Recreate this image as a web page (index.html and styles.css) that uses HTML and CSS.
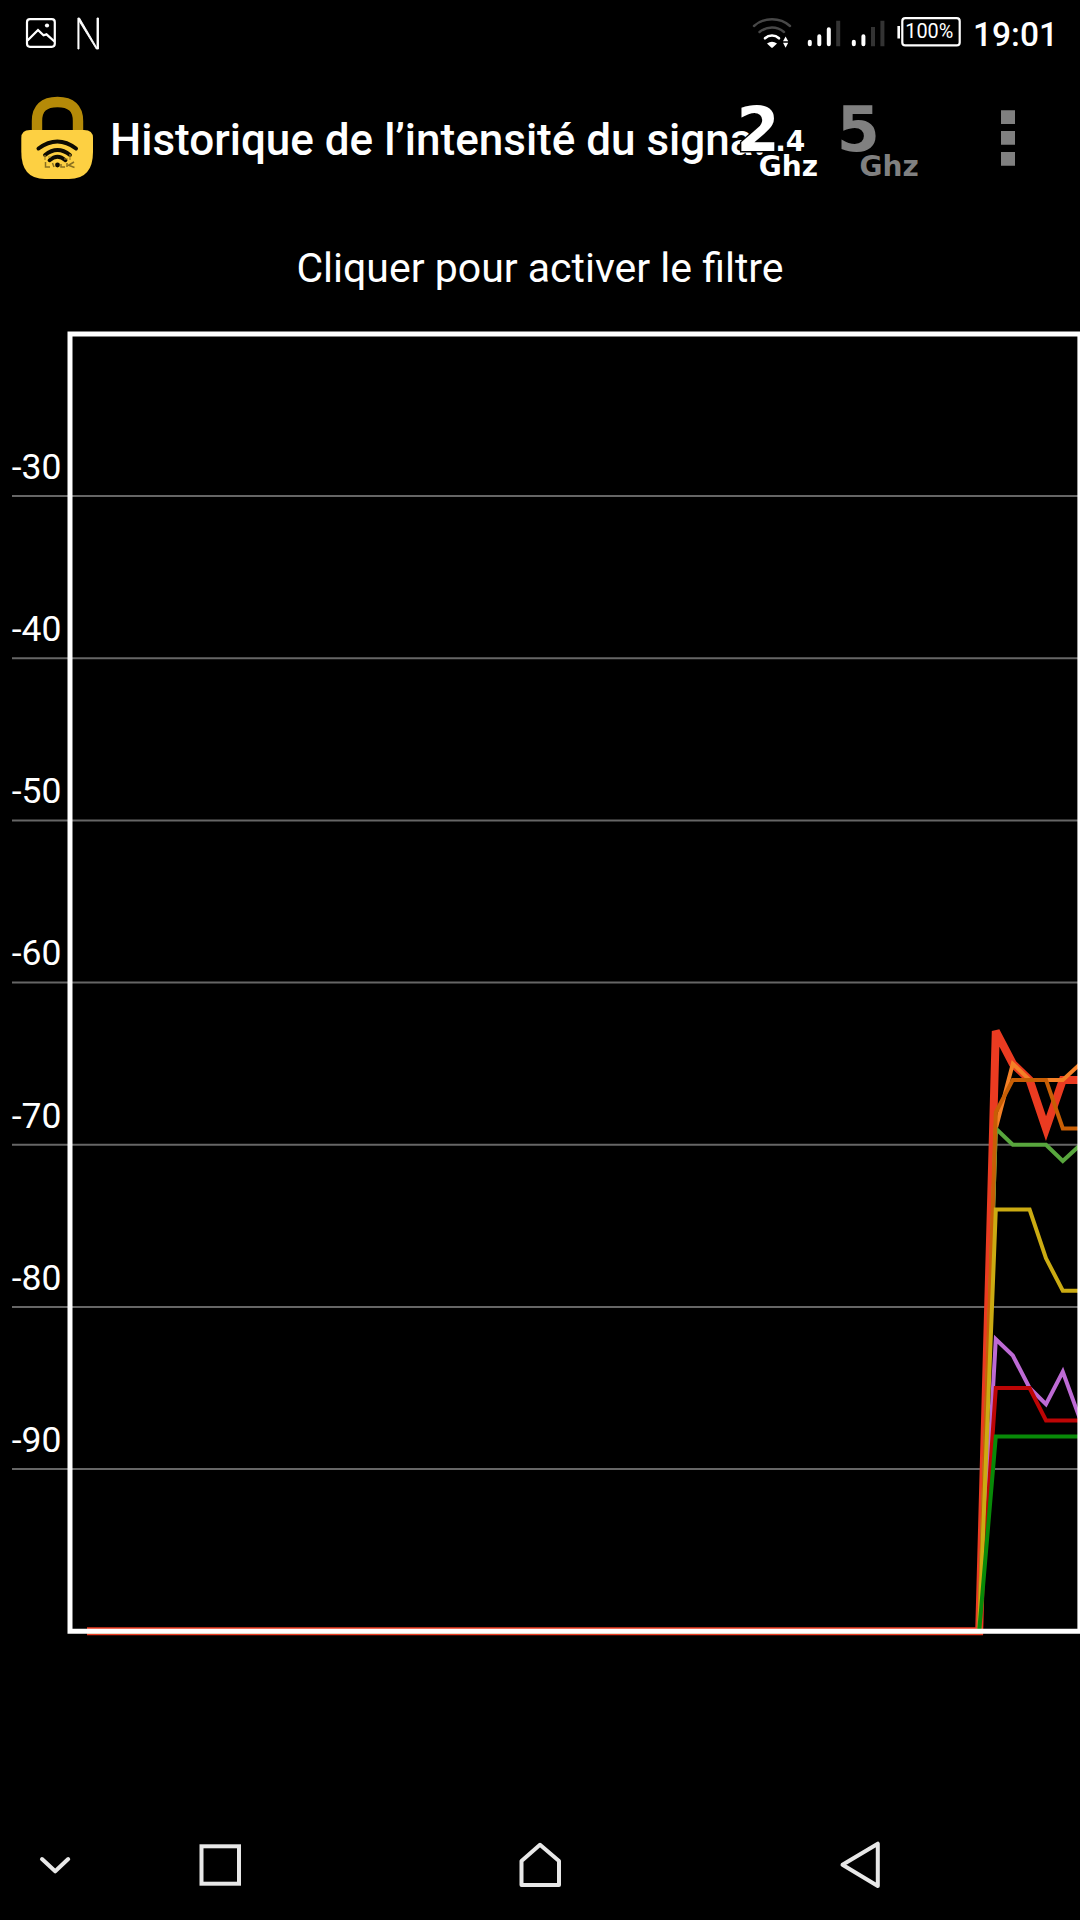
FILE: index.html
```
<!DOCTYPE html>
<html lang="fr">

<head>
    <meta charset="UTF-8">
    <meta name="viewport" content="width=device-width, initial-scale=1.0">
    <title>Historique de l’intensité du signal</title>
    <link rel="stylesheet" href="styles.css">
</head>

<body>
    <div class="status-bar">
        <svg class="status-icons" width="80" height="72" viewBox="20 0 80 72">
            <rect x="27" y="19.2" width="27.8" height="27.6" rx="3" fill="none" stroke="#fff" stroke-width="2.2"/>
            <path d="M27.5 40.5L38 30L43.5 35.3L46.5 34.3L54.5 41.5" fill="none" stroke="#fff" stroke-width="2.3"/>
            <circle cx="47" cy="25.5" r="2.1" fill="#fff"/>
            <path d="M77.9 49V18H79.5L97 48V18H98.5V49H96.3L79 21V49Z" fill="#fff" stroke="#fff" stroke-width=".9"/>
        </svg>

        <svg class="status-icons" width="220" height="72" viewBox="750 0 220 72">
            <!-- wifi -->
            <g fill="none" stroke-linecap="round">
                <path d="M754 26C764 17 780 17 790 26" stroke="#484848" stroke-width="2.4"/>
                <path d="M759.5 32C767 26 777 26 784 32" stroke="#484848" stroke-width="2.4"/>
                <path d="M765 38.3C769 34.6 775 34.6 779 38.3" stroke="#fff" stroke-width="2.6"/>
            </g>
            <path d="M767 43.5Q772 40 777 43.5L772.8 47.5Q772 48.2 771.2 47.5Z" fill="#fff"/>
            <path d="M783 41.3L785.6 36.5L788.2 41.3ZM783 42.8L785.6 47.7L788.2 42.8Z" fill="#fff"/>
            <!-- sim 1 and sim 2 -->
            <g stroke-width="4" stroke-linecap="round" stroke="#fff">
                <path d="M809.8 41.8V44.3M819.3 36.3V44.3M828.8 29.3V44.3"/>
                <path d="M853.8 41.8V44.3M863.4 36.3V44.3"/>
            </g>
            <path d="M838.2 20.7V46.3M873 27V46.3M882.4 20.7V46.3" stroke="#333" stroke-width="4"/>
            <!-- battery -->
            <rect x="902.3" y="18.2" width="57.4" height="27.2" rx="3" fill="none" stroke="#fff" stroke-width="2.2"/>
            <path d="M898.7 26V38.5" stroke="#fff" stroke-width="2.6"/>
            <text class="battery" x="905.3" y="38.4" textLength="48" lengthAdjust="spacingAndGlyphs">100%</text>
        </svg>
        <span class="clock">19:01</span>
    </div>

    <div class="action-bar">
        <svg class="logo" width="80" height="90" viewBox="16 92 80 90">
            <path d="M37 134V121Q37 102 57.5 102T78 121V134" fill="none" stroke="#b58a08" stroke-width="10.4"/>
            <path d="M30 130H84Q93 130 93 138V152Q93 179 69 179H45Q21.3 179 21.3 152V138Q21.3 130 30 130Z" fill="#fdd042"/>
            <g fill="none" stroke="#0d0b02" stroke-width="4" stroke-linecap="round">
                <path d="M38.5 148.5Q57.5 134.5 76 148.5"/>
                <path d="M45 155Q57.5 145 70 155" stroke-width="3.8"/>
                <path d="M49.5 160.3Q57.5 153 65.5 160.3" stroke-width="3.8"/>
            </g>
            <circle cx="57.5" cy="165" r="2.4" fill="#0d0b02"/>
            <path d="M45.5 162V167H50M52.5 163L54 167M61 164V167H65M67 163V167M68 165L74.5 167.5M69 165L74 162" fill="none" stroke="#8a7020" stroke-width="1.5"/>
            <path d="M45 155V160M70 154V160M48 157H51M64 159H68" stroke="#a68525" stroke-width="1.2"/>
        </svg>
        <h1 class="title">Historique de l’intensité du signa…</h1>

        <svg class="actions" width="300" height="90" viewBox="730 98 300 90">
            <g class="band band-on">
                <text x="736.6" y="151.4" class="band-number">2</text>
                <text x="775.2" y="151" class="band-unit">.4</text>
                <text x="758.8" y="175.5" class="band-unit">Ghz</text>
            </g>
            <g class="band">
                <text x="836.8" y="151.4" class="band-number">5</text>
                <text x="859.6" y="175.5" class="band-unit">Ghz</text>
            </g>
            <path d="M1001 110.3h14v13.8h-14zM1001 131h14v13.8h-14zM1001 152h14v13.8h-14z" fill="#808080"/>
        </svg>
    </div>

    <div class="filter">Cliquer pour activer le filtre</div>

    <svg class="chart" width="1080" height="1340" viewBox="0 320 1080 1340">
        <g class="grid" id="grid"></g>
        <g class="series" id="series"></g>
        <path class="frame" d="M1079.9 1631.2H70V334H1079.9Z"/>
    </svg>

    <div class="nav-bar">
        <svg width="1080" height="110" viewBox="0 1810 1080 110" fill="none" stroke="#e8e8e8" stroke-width="4">
            <path d="M42 1859L55.2 1871.3L68.2 1859" stroke-linecap="round" stroke-linejoin="round"/>
            <rect x="201.5" y="1846.3" width="37.5" height="37.4"/>
            <path d="M521.5 1885V1861L540 1844.8L559 1861V1885Z" stroke-linejoin="round"/>
            <path d="M842.5 1864.8L877.8 1843.7V1886Z" stroke-linejoin="round"/>
        </svg>
    </div>

    <script>
        var top0 = 334,
            dbStep = 16.215,
            xs = [87, 979.2, 995.8, 1012.8, 1029.6, 1046, 1062.8, 1080.5];

        // Drawn in this order, last one on top
        var series = [
            { color: '#eb3b21', width: 8, values: [-63, -65, -66, -69, -66, -66] },
            { color: '#f58026', width: 4, values: [-69, -65, -66, -66, -66, -65] },
            { color: '#58a63d', width: 4, values: [-69, -70, -70, -70, -71, -70] },
            { color: '#c75e05', width: 4, values: [-68, -66, -66, -66, -69, -69] },
            { color: '#bd6ad4', width: 4, values: [-82, -83, -85, -86, -84, -87] },
            { color: '#bd0505', width: 4, values: [-85, -85, -85, -87, -87, -87] },
            { color: '#cbab12', width: 4, values: [-74, -74, -74, -77, -79, -79] },
            { color: '#088a08', width: 4, values: [-88, -88, -88, -88, -88, -88] }
        ];

        function y(db) {
            return (top0 + (-20 - db) * dbStep).toFixed(1);
        }

        var grid = '';
        for (var db = -30; db >= -90; db -= 10) {
            grid += '<path d="M12 ' + y(db) + 'H1078"/>' +
                '<text x="11.8" y="' + (y(db) - 17.3) + '">' + db + '</text>';
        }
        document.getElementById('grid').innerHTML = grid;

        document.getElementById('series').innerHTML = series.map(function (s) {
            var points = [-100, -100].concat(s.values).map(function (v, i) {
                return xs[i] + ',' + y(v);
            });
            return '<polyline points="' + points.join(' ') + '" stroke="' + s.color + '" stroke-width="' + s.width + '"/>';
        }).join('');
    </script>
</body>

</html>
```
FILE: styles.css
```
body {
    margin: 0;
    width: 1080px;
    height: 1920px;
    display: flex;
    flex-direction: column;
    overflow: hidden;
    background: #000;
    color: #fff;
    font-family: Roboto, "Noto Sans", sans-serif;
}

svg {
    display: block;
    flex-shrink: 0;
}

.status-bar {
    display: flex;
    height: 72px;
    padding-left: 20px;
}

.status-icons + .status-icons {
    margin-left: 650px;
}

.battery {
    font-size: 20px;
    fill: #fff;
}

.clock {
    padding-left: 3px;
    font-size: 33.5px;
    font-weight: 500;
    line-height: 69px;
}

.action-bar {
    display: flex;
    align-items: flex-start;
    height: 144px;
    padding-left: 16px;
}

.logo {
    margin-top: 20px;
}

/* The title runs on under the band buttons */
.title {
    flex-shrink: 0;
    width: 653px;
    margin: 0 -33px 0 14px;
    overflow: hidden;
    font-size: 44px;
    font-weight: 500;
    line-height: 136px;
    white-space: nowrap;
}

.actions {
    position: relative;
    margin-top: 26px;
}

.band {
    font-family: "DejaVu Sans", sans-serif;
    font-weight: bold;
    fill: #808080;
    stroke: #000;
    stroke-width: 3px;
    paint-order: stroke;
}

.band-on {
    fill: #fff;
}

.band-number {
    font-size: 62px;
}

.band-unit {
    font-size: 28px;
}

.filter {
    height: 104px;
    font-size: 41px;
    line-height: 105px;
    text-align: center;
}

.grid path {
    stroke: #666;
    stroke-width: 2;
}

.grid text {
    font-size: 35.5px;
    fill: #fff;
}

.series {
    fill: none;
    stroke-miterlimit: 3.5;
}

.frame {
    fill: none;
    stroke: #fff;
    stroke-width: 5;
}

.nav-bar {
    margin-top: auto;
}
```
